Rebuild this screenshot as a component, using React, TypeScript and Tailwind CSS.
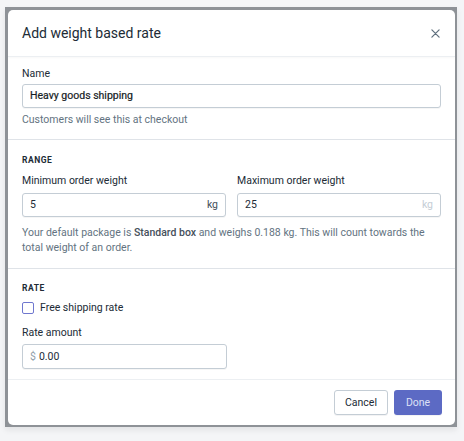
import React from "react";

const font = { fontFamily: "Roboto, 'Noto Sans', sans-serif" };

// Small labelled text field, used for the name, weights and rate amount
interface FieldProps {
  value: string;
  prefix?: string;
  suffix?: string;
  suffixMuted?: boolean;
  className?: string;
}

const Field: React.FC<FieldProps> = ({ value, prefix, suffix, suffixMuted, className }) => (
  <div
    className={`flex items-center h-[24px] rounded-[3px] border border-[#c4cdd5] bg-white px-[7px] shadow-[0_1px_0_rgba(22,29,37,0.04)] ${className ?? ""}`}
  >
    {prefix && <span className="text-[10.5px] text-[#919eab] mr-[3px]">{prefix}</span>}
    <span className="flex-1 text-[10.5px] text-[#212b36]">{value}</span>
    {suffix && (
      <span className={`text-[10.5px] ${suffixMuted ? "text-[#c4cdd5]" : "text-[#454f5b]"}`}>
        {suffix}
      </span>
    )}
  </div>
);

const App: React.FC = () => {
  return (
    <div className="w-[464px] h-[441px] bg-[#f4f5f7] pt-[7px] pl-[5px]" style={font}>
      <div className="w-[452px] h-[420px] bg-[#8e9297] pt-[3px] pl-[3px] pr-[2px] pb-[2px] shadow-[0_3px_6px_rgba(0,0,0,0.08)]">
        <div className="h-full bg-white rounded-[5px] flex flex-col overflow-hidden">
          {/* header */}
          <div className="h-[47px] flex items-center justify-between pl-[14px] pr-[15px] border-b border-[#eceff2] shadow-[0_1px_2px_rgba(0,0,0,0.03)]">
            <h1 className="text-[14px] text-[#212b36] font-normal">Add weight based rate</h1>
            <svg className="w-[9px] h-[9px]" viewBox="0 0 10 10" fill="none" stroke="#637381" strokeWidth={1.4} strokeLinecap="round">
              <path d="M1 1l8 8M9 1L1 9" />
            </svg>
          </div>

          {/* name */}
          <div className="px-[14px] pt-[9px] pb-[11px] border-b border-[#dfe3e8]">
            <div className="text-[10.5px] leading-[16px] text-[#212b36]">Name</div>
            <Field value="Heavy goods shipping" className="mt-[2px] [&>span]:text-[#161d25] [&>span]:[-webkit-text-stroke:0.2px_#161d25]" />
            <p className="mt-[4px] text-[10.5px] leading-[16px] text-[#637381]">
              Customers will see this at checkout
            </p>
          </div>

          {/* range */}
          <div className="px-[14px] pt-[14px] pb-[13px] border-b border-[#dfe3e8]">
            <div className="text-[8.5px] leading-[12px] font-bold tracking-[0.06em] text-[#212b36]">
              RANGE
            </div>
            <div className="mt-[7px] grid grid-cols-2 gap-x-[11px]">
              <div>
                <div className="text-[10.5px] leading-[16px] text-[#212b36]">Minimum order weight</div>
                <Field value="5" suffix="kg" className="mt-[4px]" />
              </div>
              <div>
                <div className="text-[10.5px] leading-[16px] text-[#212b36]">Maximum order weight</div>
                <Field value="25" suffix="kg" suffixMuted className="mt-[4px]" />
              </div>
            </div>
            <p className="mt-[8px] text-[10.5px] leading-[15px] text-[#637381]">
              Your default package is <span className="font-medium text-[#454f5b]">Standard box</span> and
              weighs 0.188 kg. This will count towards the total weight of an order.
            </p>
          </div>

          {/* rate */}
          <div className="px-[14px] pt-[13px] pb-[10px] border-b border-[#eceff2]">
            <div className="text-[8.5px] leading-[12px] font-bold tracking-[0.06em] text-[#212b36]">
              RATE
            </div>
            <label className="mt-[6px] flex items-center gap-[6px] h-[16px]">
              <span className="w-[12px] h-[12px] rounded-[2px] border-[1.5px] border-[#6f77cf] bg-white" />
              <span className="text-[10.5px] text-[#212b36]">Free shipping rate</span>
            </label>
            <div className="mt-[9px] text-[10.5px] leading-[16px] text-[#212b36]">Rate amount</div>
            <Field value="0.00" prefix="$" className="mt-[3px] h-[25px] w-[205px]" />
          </div>

          {/* footer */}
          <div className="flex-1 flex justify-end items-start gap-[6px] pt-[10px] pr-[13px]">
            <button className="h-[25px] w-[54px] rounded-[3px] border border-[#c4cdd5] bg-white text-[10.5px] text-[#212b36] shadow-[0_1px_0_rgba(22,29,37,0.05)]">
              Cancel
            </button>
            <button className="h-[25px] w-[48px] rounded-[3px] bg-[#5c6ac4] text-[10.5px] text-[#dde0f6] shadow-[0_1px_0_rgba(22,29,37,0.05)]">
              Done
            </button>
          </div>
        </div>
      </div>
    </div>
  );
};

export default App;
